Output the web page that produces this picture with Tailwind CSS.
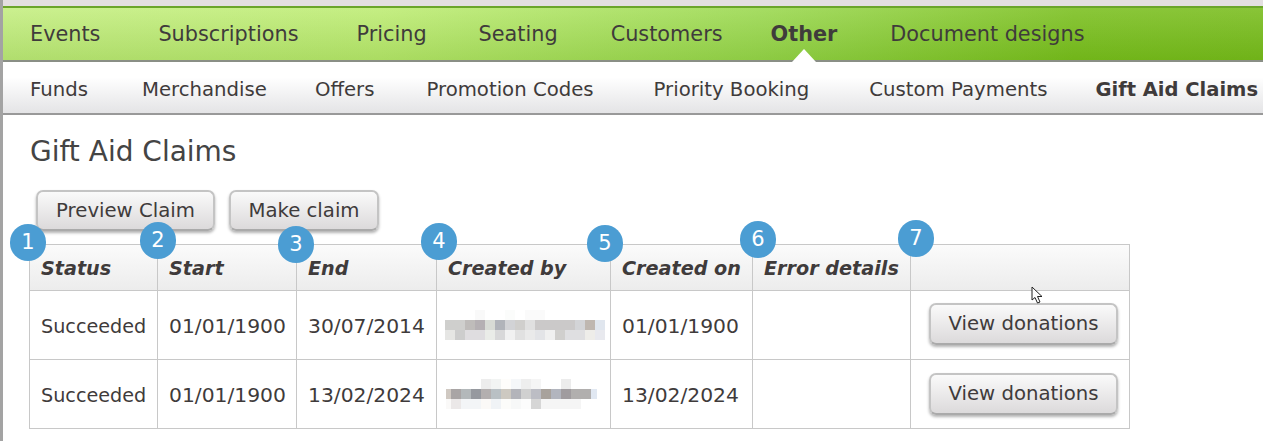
<!DOCTYPE html>
<html lang="en">
<head>
    <meta charset="UTF-8">
    <meta name="viewport" content="width=device-width, initial-scale=1.0">
    <title>Gift Aid Claims</title>
    <script src="https://cdn.jsdelivr.net/npm/@tailwindcss/browser@4"></script>
</head>
<body class="relative h-[441px] overflow-hidden bg-white border-l-[3px] border-[#a3a3a3] font-['DejaVu_Sans','Verdana',sans-serif] text-[#3f3b3b]">
    <div class="h-[6px] bg-[#e3dfe0]"></div>

    <!-- main nav -->
    <nav class="relative h-[56px] flex items-center pl-[27px] pt-[1px] text-[20.8px] whitespace-nowrap border-t-2 border-t-[#6ba52a] border-b-2 border-b-[#8a8f86] bg-[linear-gradient(to_bottom,rgba(255,255,255,0.12),rgba(60,120,0,0.14)),linear-gradient(to_right,#c4ee80,#bdec72_30%,#9ad84e_60%,#7abf1e_85%,#78bc1c)]">
        <a>Events</a>
        <a class="ml-[58px]">Subscriptions</a>
        <a class="ml-[58px]">Pricing</a>
        <a class="ml-[52px]">Seating</a>
        <a class="ml-[53px]">Customers</a>
        <a class="ml-[48px] font-bold">Other</a>
        <a class="ml-[53px]">Document designs</a>
        <div class="absolute left-[789px] bottom-[-2px] w-0 h-0 border-x-[12px] border-x-transparent border-b-[13px] border-b-white"></div>
    </nav>

    <!-- sub nav -->
    <nav class="h-[53px] flex items-center pl-[27px] pt-[4px] text-[19.7px] whitespace-nowrap border-b-2 border-b-[#999] bg-linear-to-b from-white from-30% to-[#e4e4e6]">
        <a>Funds</a>
        <a class="ml-[54px]">Merchandise</a>
        <a class="ml-[48px]">Offers</a>
        <a class="ml-[52px]">Promotion Codes</a>
        <a class="ml-[60px]">Priority Booking</a>
        <a class="ml-[60px]">Custom Payments</a>
        <a class="ml-[48px] font-bold text-[19.5px]">Gift Aid Claims</a>
    </nav>

    <main class="pl-[26px]">
        <h1 class="mt-[20px] ml-[1px] text-[28px] leading-[34px] text-[#444]">Gift Aid Claims</h1>

        <div class="mt-[21px] ml-[7px] flex gap-[14px]">
            <button class="w-[179px] h-[41px] text-[19.7px] rounded-[7px] border-2 border-[#c4c4c4] border-b-[#aaa] bg-linear-to-b from-[#fafafa] to-[#dcdadb] shadow-[0_2px_3px_rgba(0,0,0,0.3)]">Preview Claim</button>
            <button class="w-[150px] h-[41px] text-[19.7px] rounded-[7px] border-2 border-[#c4c4c4] border-b-[#aaa] bg-linear-to-b from-[#fafafa] to-[#dcdadb] shadow-[0_2px_3px_rgba(0,0,0,0.3)]">Make claim</button>
        </div>

        <table class="mt-[13px] w-[1100px] table-fixed border-collapse text-[19.2px]">
            <colgroup>
                <col class="w-[128px]"><col class="w-[139px]"><col class="w-[140px]"><col class="w-[174px]"><col class="w-[142px]"><col class="w-[158px]"><col class="w-[219px]">
            </colgroup>
            <thead>
                <tr class="h-[46px] bg-linear-to-b from-[#fbfbfb] to-[#ececec] font-bold italic text-left">
                    <th class="border border-[#c8c8c8] pl-[11px] pt-[4px]">Status</th>
                    <th class="border border-[#c8c8c8] pl-[11px] pt-[4px]">Start</th>
                    <th class="border border-[#c8c8c8] pl-[11px] pt-[4px]">End</th>
                    <th class="border border-[#c8c8c8] pl-[11px] pt-[4px]">Created by</th>
                    <th class="border border-[#c8c8c8] pl-[11px] pt-[4px] whitespace-nowrap">Created on</th>
                    <th class="border border-[#c8c8c8] pl-[11px] pt-[4px] whitespace-nowrap">Error details</th>
                    <th class="border border-[#c8c8c8]"></th>
                </tr>
            </thead>
            <tbody>
                <tr class="h-[69px]">
                    <td class="border border-[#c8c8c8] pl-[11px] pt-[4px]">Succeeded</td>
                    <td class="border border-[#c8c8c8] pl-[11px] pt-[2px] text-[20.3px]">01/01/1900</td>
                    <td class="border border-[#c8c8c8] pl-[11px] pt-[2px] text-[20.3px]">30/07/2014</td>
                    <td class="border border-[#c8c8c8] pl-[8px]">
                        <svg width="160" height="30" shape-rendering="crispEdges" class="block">
                            <rect x="30" width="10" height="10" fill="#f9f9f9"/><rect x="60" width="10" height="10" fill="#fbfcfb"/><rect x="80" width="20" height="10" fill="#fafafa"/>
                            <rect x="0" y="10" width="20" height="10" fill="#cfcfcd"/><rect x="20" y="10" width="10" height="10" fill="#bfbcba"/><rect x="30" y="10" width="10" height="10" fill="#b5b0b3"/><rect x="40" y="10" width="10" height="10" fill="#d8dbd5"/><rect x="50" y="10" width="10" height="10" fill="#b1b4ba"/><rect x="60" y="10" width="10" height="10" fill="#d2d3d6"/><rect x="70" y="10" width="10" height="10" fill="#d0cfcd"/><rect x="80" y="10" width="10" height="10" fill="#e0e0e0"/><rect x="90" y="10" width="40" height="10" fill="#cbc9c9"/><rect x="130" y="10" width="10" height="10" fill="#d3d4d7"/><rect x="140" y="10" width="10" height="10" fill="#bfb7b0"/><rect x="150" y="10" width="10" height="10" fill="#e0e6ee"/>
                            <rect x="0" y="20" width="10" height="10" fill="#e6e6e4"/><rect x="10" y="20" width="10" height="10" fill="#cdcdcd"/><rect x="20" y="20" width="20" height="10" fill="#dfdde0"/><rect x="40" y="20" width="10" height="10" fill="#eaece8"/><rect x="50" y="20" width="10" height="10" fill="#d8d8d9"/><rect x="60" y="20" width="10" height="10" fill="#f1f1f1"/><rect x="70" y="20" width="10" height="10" fill="#e1e1e1"/><rect x="80" y="20" width="10" height="10" fill="#eaeaea"/><rect x="90" y="20" width="10" height="10" fill="#e3e4e7"/><rect x="100" y="20" width="10" height="10" fill="#f0f0f0"/><rect x="110" y="20" width="10" height="10" fill="#d0cfcd"/><rect x="120" y="20" width="20" height="10" fill="#dfdfe1"/><rect x="140" y="20" width="10" height="10" fill="#eeede9"/><rect x="150" y="20" width="10" height="10" fill="#e8e9ee"/>
                        </svg>
                    </td>
                    <td class="border border-[#c8c8c8] pl-[11px] pt-[2px] text-[20.3px]">01/01/1900</td>
                    <td class="border border-[#c8c8c8]"></td>
                    <td class="border border-[#c8c8c8] pl-[18px] pb-[2px]">
                        <button class="block w-[189px] h-[42px] text-[19.7px] rounded-[7px] border-2 border-[#c4c4c4] border-b-[#aaa] bg-linear-to-b from-[#fafafa] to-[#dcdadb] shadow-[0_2px_3px_rgba(0,0,0,0.3)]">View donations</button>
                    </td>
                </tr>
                <tr class="h-[69px]">
                    <td class="border border-[#c8c8c8] pl-[11px] pt-[4px]">Succeeded</td>
                    <td class="border border-[#c8c8c8] pl-[11px] pt-[3px] text-[20.3px]">01/01/1900</td>
                    <td class="border border-[#c8c8c8] pl-[11px] pt-[3px] text-[20.3px]">13/02/2024</td>
                    <td class="border border-[#c8c8c8] pl-[9px]">
                        <svg width="151" height="30" shape-rendering="crispEdges" class="block">
                            <rect x="35" width="10" height="10" fill="#ededed"/><rect x="45" width="10" height="10" fill="#f2f4f3"/><rect x="55" width="10" height="10" fill="#fefdfb"/><rect x="65" width="10" height="10" fill="#f5f7f9"/><rect x="75" width="10" height="10" fill="#eeeeee"/><rect x="85" width="10" height="10" fill="#f5f5f5"/><rect x="115" width="10" height="10" fill="#ececec"/>
                            <rect x="0" y="10" width="5" height="10" fill="#d0c9c2"/><rect x="5" y="10" width="10" height="10" fill="#a9a5a5"/><rect x="15" y="10" width="10" height="10" fill="#b3b8ba"/><rect x="25" y="10" width="10" height="10" fill="#96999f"/><rect x="35" y="10" width="10" height="10" fill="#b3afaf"/><rect x="45" y="10" width="10" height="10" fill="#b9c0c4"/><rect x="55" y="10" width="10" height="10" fill="#cdc9c1"/><rect x="65" y="10" width="10" height="10" fill="#b3b4ba"/><rect x="75" y="10" width="10" height="10" fill="#d0d0d0"/><rect x="85" y="10" width="10" height="10" fill="#bcbdc4"/><rect x="95" y="10" width="10" height="10" fill="#a8a29c"/><rect x="105" y="10" width="10" height="10" fill="#b2b5be"/><rect x="115" y="10" width="10" height="10" fill="#a09c9f"/><rect x="125" y="10" width="20" height="10" fill="#b1afae"/><rect x="145" y="10" width="6" height="10" fill="#e1e8f2"/>
                            <rect x="0" y="20" width="5" height="10" fill="#faf9f8"/><rect x="5" y="20" width="10" height="10" fill="#ebe8e8"/><rect x="15" y="20" width="20" height="10" fill="#f3f5f7"/><rect x="35" y="20" width="10" height="10" fill="#fbf9f7"/><rect x="45" y="20" width="10" height="10" fill="#f0f3f6"/><rect x="55" y="20" width="10" height="10" fill="#fcfcfa"/><rect x="65" y="20" width="10" height="10" fill="#f7f8f8"/><rect x="75" y="20" width="10" height="10" fill="#fcfcfc"/><rect x="85" y="20" width="10" height="10" fill="#d6d6d6"/><rect x="95" y="20" width="40" height="10" fill="#f5f5f5"/>
                        </svg>
                    </td>
                    <td class="border border-[#c8c8c8] pl-[11px] pt-[3px] text-[20.3px]">13/02/2024</td>
                    <td class="border border-[#c8c8c8]"></td>
                    <td class="border border-[#c8c8c8] pl-[18px]">
                        <button class="block w-[189px] h-[42px] text-[19.7px] rounded-[7px] border-2 border-[#c4c4c4] border-b-[#aaa] bg-linear-to-b from-[#fafafa] to-[#dcdadb] shadow-[0_2px_3px_rgba(0,0,0,0.3)]">View donations</button>
                    </td>
                </tr>
            </tbody>
        </table>
    </main>

    <!-- numbered callouts sit over the table -->
    <span class="absolute left-[7px] top-[224px] w-[36px] h-[37px] rounded-full bg-[#4b9dd3] text-white text-[21px] flex items-center justify-center">1</span>
    <span class="absolute left-[137px] top-[222px] w-[36px] h-[37px] rounded-full bg-[#4b9dd3] text-white text-[21px] flex items-center justify-center">2</span>
    <span class="absolute left-[275px] top-[226px] w-[36px] h-[37px] rounded-full bg-[#4b9dd3] text-white text-[21px] flex items-center justify-center">3</span>
    <span class="absolute left-[418px] top-[223px] w-[36px] h-[37px] rounded-full bg-[#4b9dd3] text-white text-[21px] flex items-center justify-center">4</span>
    <span class="absolute left-[584px] top-[225px] w-[36px] h-[37px] rounded-full bg-[#4b9dd3] text-white text-[21px] flex items-center justify-center">5</span>
    <span class="absolute left-[737px] top-[221px] w-[36px] h-[37px] rounded-full bg-[#4b9dd3] text-white text-[21px] flex items-center justify-center">6</span>
    <span class="absolute left-[895px] top-[220px] w-[36px] h-[37px] rounded-full bg-[#4b9dd3] text-white text-[21px] flex items-center justify-center">7</span>

    <!-- mouse pointer -->
    <svg class="absolute left-[1028px] top-[286px]" width="14" height="19" viewBox="0 0 14 19">
        <path d="M1 1V14L4 11.5L6.5 17L9 16L6.5 10.5H11Z" fill="#fff" stroke="#222" stroke-width="1"/>
    </svg>
</body>
</html>
